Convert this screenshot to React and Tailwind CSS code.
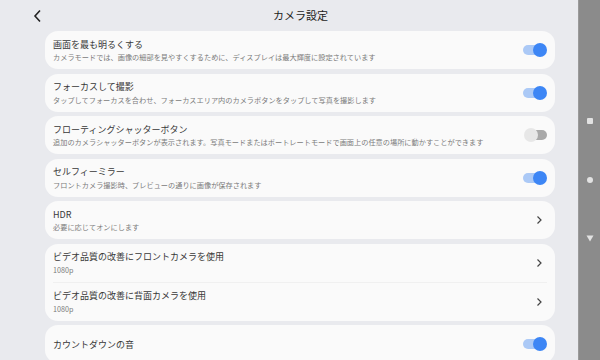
import React from 'react';

const font = { fontFamily: '"Noto Sans CJK JP", "Noto Sans", sans-serif' };

const Toggle = ({ on }) => (
  <div className="relative w-[24px] h-[14px] shrink-0">
    {on ? (
      <>
        <div className="absolute left-0 top-[2px] w-[20px] h-[10px] rounded-full bg-[#abc9f6]" />
        <div className="absolute right-0 top-0 w-[14px] h-[14px] rounded-full bg-[#3d86f5]" />
      </>
    ) : (
      <>
        <div className="absolute right-0 top-[2px] w-[20px] h-[10px] rounded-full bg-[#a9a9a9]" />
        <div className="absolute left-[1px] top-0 w-[14px] h-[14px] rounded-full bg-[#e7e7e7]" />
      </>
    )}
  </div>
);

const Chevron = () => (
  <svg width="10" height="10" viewBox="0 0 10 10" className="shrink-0 mr-[3px]">
    <path d="M3.5 1.5 L7 5 L3.5 8.5" fill="none" stroke="#444" strokeWidth="1.2" />
  </svg>
);

const Row = ({ title, sub, right }) => (
  <div className="h-[38px] flex items-center justify-between pl-[8px] pr-[8px]">
    <div className="flex flex-col">
      <div className="text-[9px] leading-[13px] text-[#383838]">{title}</div>
      {sub && <div className="text-[7.2px] leading-[10px] mt-[1.5px] text-[#7a7a7a]">{sub}</div>}
    </div>
    {right}
  </div>
);

const Card = ({ children }) => (
  <div className="bg-[#fafafa] rounded-[13px]">{children}</div>
);

export default function App() {
  return (
    <div className="w-[600px] h-[360px] flex overflow-hidden" style={font}>
      <div className="w-[578px] h-full bg-[#e9eaee] flex flex-col">
        <div className="h-[31px] shrink-0 flex items-center">
          <svg width="10" height="14" viewBox="0 0 10 14" className="ml-[33px]">
            <path d="M7 1.5 L2 7 L7 12.5" fill="none" stroke="#222" strokeWidth="1.6" />
          </svg>
          <div className="flex-1 text-center pr-[20px] text-[11px] text-[#222]">カメラ設定</div>
        </div>
        <div className="ml-[45px] w-[510px] flex flex-col gap-[4.5px]">
          <Card>
            <Row title="画面を最も明るくする" sub="カメラモードでは、画像の細部を見やすくするために、ディスプレイは最大輝度に設定されています" right={<Toggle on />} />
          </Card>
          <Card>
            <Row title="フォーカスして撮影" sub="タップしてフォーカスを合わせ、フォーカスエリア内のカメラボタンをタップして写真を撮影します" right={<Toggle on />} />
          </Card>
          <Card>
            <Row title="フローティングシャッターボタン" sub="追加のカメラシャッターボタンが表示されます。写真モードまたはポートレートモードで画面上の任意の場所に動かすことができます" right={<Toggle />} />
          </Card>
          <Card>
            <Row title="セルフィーミラー" sub="フロントカメラ撮影時、プレビューの通りに画像が保存されます" right={<Toggle on />} />
          </Card>
          <Card>
            <Row title="HDR" sub="必要に応じてオンにします" right={<Chevron />} />
          </Card>
          <Card>
            <Row title="ビデオ品質の改善にフロントカメラを使用" sub="1080p" right={<Chevron />} />
            <div className="mx-[8px] h-px bg-[#f0f0f0]" />
            <Row title="ビデオ品質の改善に背面カメラを使用" sub="1080p" right={<Chevron />} />
          </Card>
          <Card>
            <Row title="カウントダウンの音" right={<Toggle on />} />
          </Card>
        </div>
      </div>
      <div className="w-[22px] h-full bg-[#8b8b8b] border-l border-[#9a9a9a] flex flex-col items-center">
        <div className="mt-[118px] w-[6px] h-[6px] bg-[#e2e2e2] rounded-[1px]" />
        <div className="mt-[53px] w-[6px] h-[6px] bg-[#e2e2e2] rounded-full" />
        <svg width="8" height="7" viewBox="0 0 8 7" className="mt-[52px]">
          <path d="M0.5 0.5 L7.5 0.5 L4 6.5 Z" fill="#e2e2e2" />
        </svg>
      </div>
    </div>
  );
}
